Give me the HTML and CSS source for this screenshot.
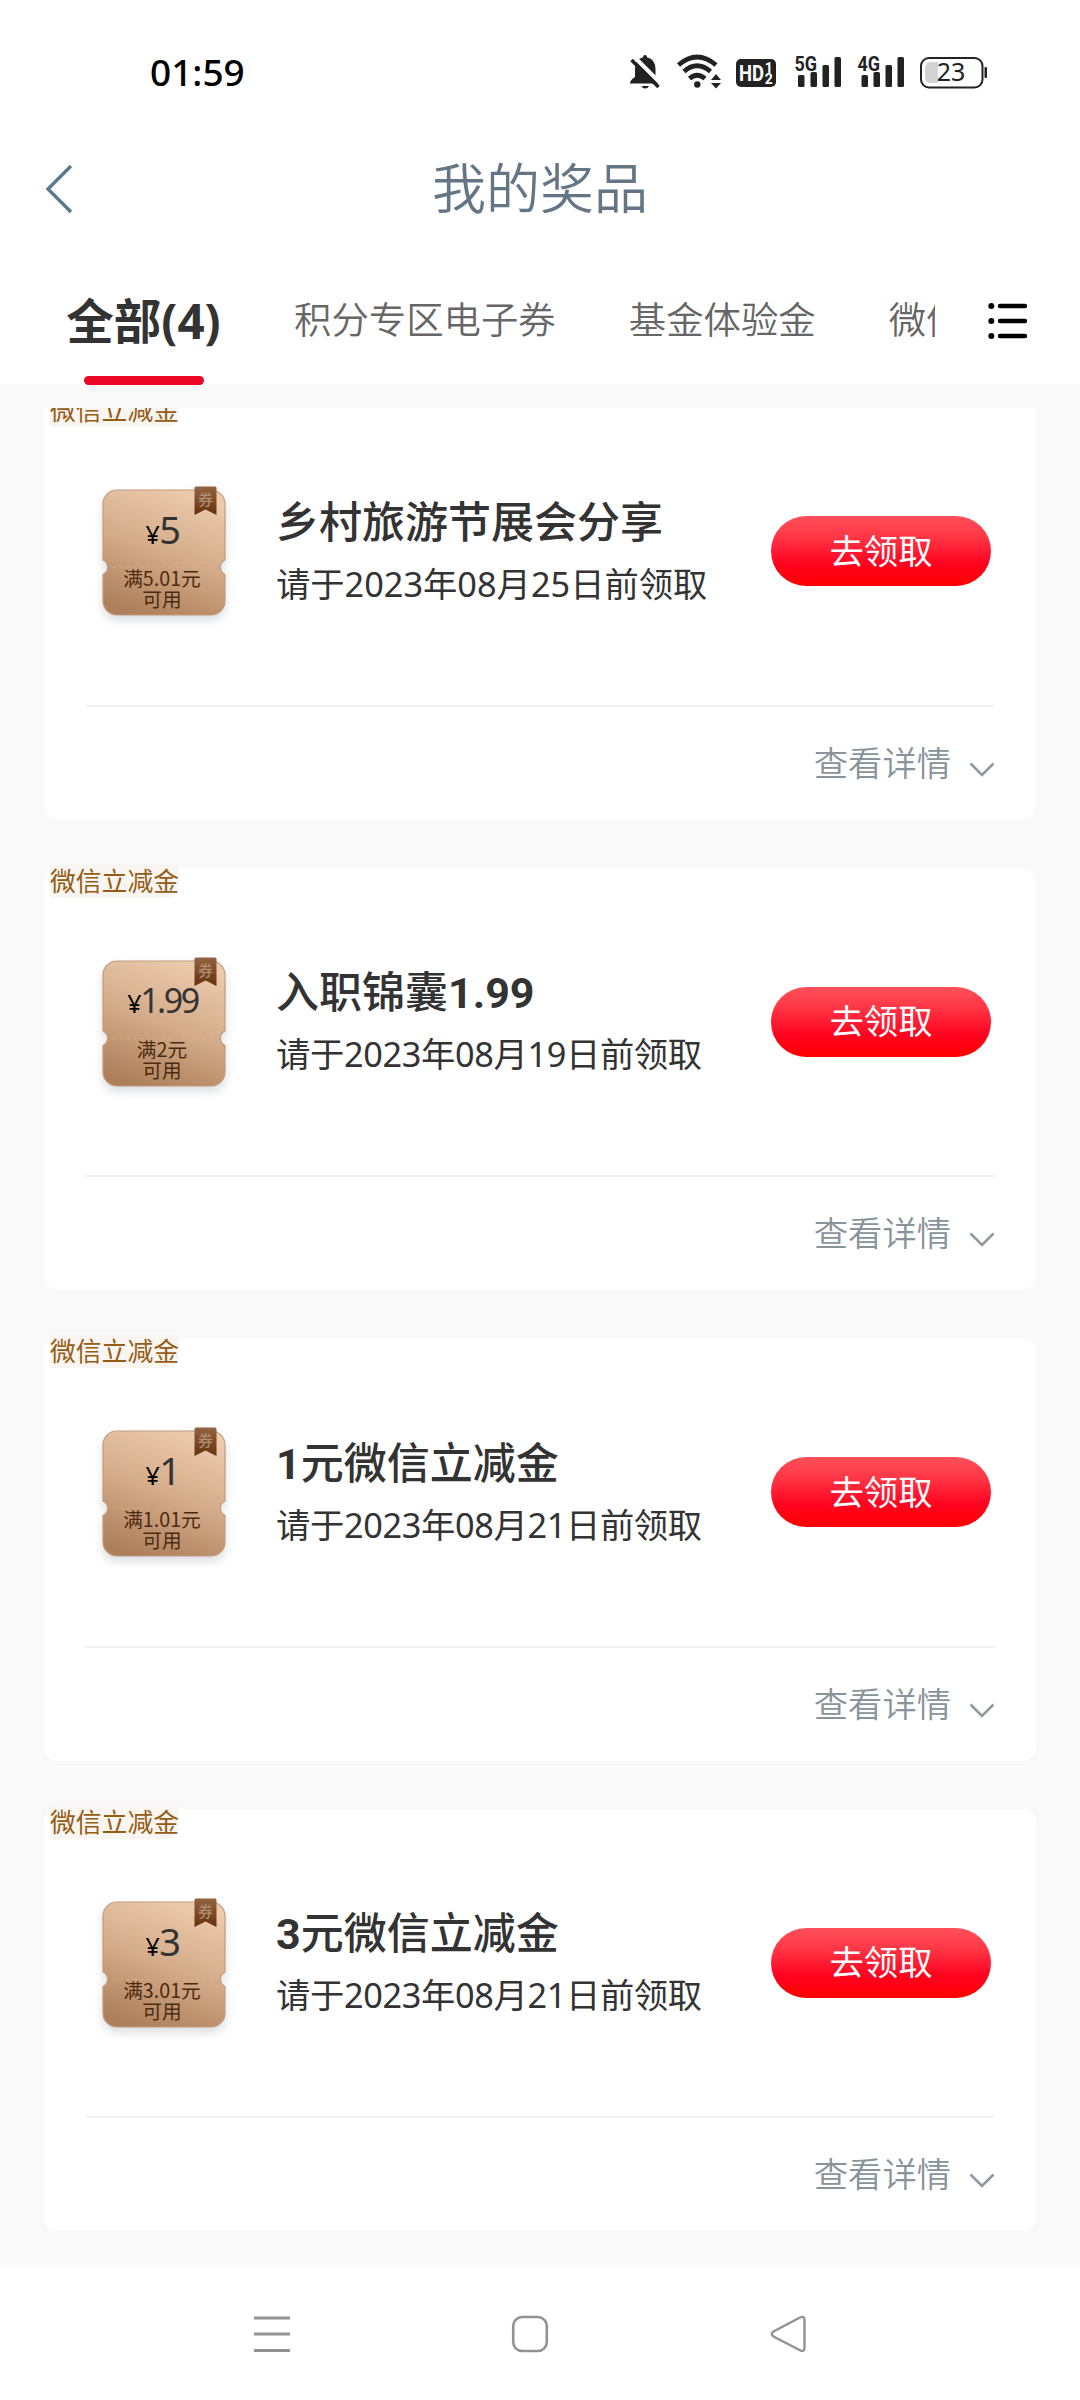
FILE: index.html
```html
<!DOCTYPE html>
<html lang="zh-CN">
<head>
<meta charset="utf-8">
<title>我的奖品</title>
<link rel="stylesheet" href="styles.css">
</head>
<body>
<svg class="defs" width="0" height="0" aria-hidden="true">
  <defs>
    <linearGradient id="gold" x1="0.65" y1="0" x2="0.3" y2="1">
      <stop offset="0" stop-color="#eccaac"/>
      <stop offset="0.5" stop-color="#d3ab89"/>
      <stop offset="1" stop-color="#ae7f5b"/>
    </linearGradient>
    <linearGradient id="ribbon" x1="0" y1="0" x2="0" y2="1">
      <stop offset="0" stop-color="#946442"/>
      <stop offset="1" stop-color="#64310c"/>
    </linearGradient>
    <symbol id="coupon" viewBox="0 0 124 130">
      <path d="M15 4H109a14 14 0 0 1 14 14V74a8 8 0 0 0 0 14.500V115a14 14 0 0 1 -14 14H15a14 14 0 0 1 -14 -14V88.500a8 8 0 0 0 0 -14.500V18a14 14 0 0 1 14 -14z" fill="url(#gold)" stroke="#c29c80" stroke-width="1.200"/>
      <path d="M10 81.500H114" stroke="#e4c6ac" stroke-width="1" stroke-dasharray="4 3" opacity="0.3"/>
      <path d="M92.500 2q0-1.500 1.500-1.500H113q1.500 0 1.500 1.500V29L103.500 23.500L92.500 29z" fill="url(#ribbon)"/>
    </symbol>
    <symbol id="down" viewBox="0 0 26 16">
      <path d="M1.500 1.500L13 13L24.500 1.500" fill="none" stroke="#8f999f" stroke-width="2.600"/>
    </symbol>
  </defs>
</svg>

<div class="status">
  <span class="clock">01:59</span>
  <svg class="status-icons" width="362" height="40" viewBox="628 52 362 40" fill="#222">
    <path d="M645 55q2 0 2 2.300q8.500 2 8.500 12v8.500q4.500 2.500 4.500 5.700H630q0-3.500 5-6.500v-7.700q0-10 8-12q0-2.300 2-2.300zM641.500 86h7.500q-1 2.500-3.750 2.500t-3.750-2.500z"/>
    <path d="M631 57.500L661 87.500" stroke="#fff" stroke-width="4" transform="translate(1.800 -2)"/>
    <path d="M631.500 60L658.500 87" stroke="#222" stroke-width="3.600"/>
    <g fill="none" stroke="#222" stroke-width="4.800">
      <path d="M678.500 65Q697 49 716 65"/>
      <path d="M684 71.500Q697 60 710.500 71.500"/>
      <path d="M689.500 78.500Q697 72 705 78.500"/>
    </g>
    <circle cx="697.300" cy="84.500" r="3.200"/>
    <path d="M711 80L716 74L721 80zM711 83L721 83L716 88.500z"/>
    <rect x="736" y="59" width="40" height="28" rx="5"/>
    <text x="739" y="81" class="hd" textLength="25" lengthAdjust="spacingAndGlyphs">HD</text>
    <text x="764.800" y="73" class="sim">1</text>
    <text x="764.800" y="84" class="sim">2</text>
    <text x="794.500" y="70.500" class="net" textLength="22.500" lengthAdjust="spacingAndGlyphs">5G</text>
    <rect x="798" y="75" width="6.500" height="12" rx="1.500"/>
    <rect x="810.500" y="72" width="6.500" height="15" rx="1.500"/>
    <rect x="822.500" y="65" width="6.500" height="22" rx="1.500"/>
    <rect x="834.500" y="57" width="6.500" height="30" rx="1.500"/>
    <text x="857.500" y="70.500" class="net" textLength="22.500" lengthAdjust="spacingAndGlyphs">4G</text>
    <rect x="861.500" y="75" width="6.500" height="12" rx="1.500"/>
    <rect x="873.500" y="72" width="6.500" height="15" rx="1.500"/>
    <rect x="885.500" y="65" width="6.500" height="22" rx="1.500"/>
    <rect x="897.500" y="57" width="6.500" height="30" rx="1.500"/>
    <path d="M931 62h7v21h-7q-6 0-6-6v-9q0-6 6-6z" fill="#d3d3d3"/>
    <rect x="921" y="58" width="61.500" height="29.500" rx="8" fill="none" stroke="#222" stroke-width="2"/>
    <rect x="984.500" y="67" width="2.500" height="11" rx="1"/>
    <text x="951" y="81" class="battery">23</text>
  </svg>
</div>

<header class="header">
  <svg class="back" width="30" height="50" viewBox="0 0 30 50"><path d="M27 2L4 25L27 48" fill="none" stroke="#5c7a8e" stroke-width="3.400"/></svg>
  <h1 class="title">我的奖品</h1>
</header>

<nav class="tabs">
  <div class="tab-strip">
    <span class="tab active">全部(4)</span>
    <span class="tab">积分专区电子券</span>
    <span class="tab">基金体验金</span>
    <span class="tab">微信立减金</span>
  </div>
  <svg class="list-icon" width="40" height="38" viewBox="0 0 40 38">
    <g stroke="#000" stroke-width="4.400" stroke-linecap="round"><path d="M12 4H37M12 19H37M12 34H37"/></g>
    <circle cx="3.300" cy="4" r="3"/><circle cx="3.300" cy="19" r="3"/><circle cx="3.300" cy="34" r="3"/>
  </svg>
</nav>

<main class="viewport">
  <div class="cards">
    <article class="card">
      <span class="tag">微信立减金</span>
      <div class="body">
        <div class="coupon"><svg class="shape"><use href="#coupon"/></svg><span class="seal">券</span>
          <div class="amount"><small>¥</small>5</div><div class="rule">满5.01元<br>可用</div></div>
        <div class="info"><h2 class="name">乡村旅游节展会分享</h2><p class="due">请于2023年08月25日前领取</p></div>
        <button class="claim">去领取</button>
      </div>
      <div class="more">查看详情<svg class="chev"><use href="#down"/></svg></div>
    </article>
    <article class="card">
      <span class="tag">微信立减金</span>
      <div class="body">
        <div class="coupon"><svg class="shape"><use href="#coupon"/></svg><span class="seal">券</span>
          <div class="amount long"><small>¥</small>1.99</div><div class="rule">满2元<br>可用</div></div>
        <div class="info"><h2 class="name">入职锦囊<b>1.99</b></h2><p class="due one">请于2023年08月19日前领取</p></div>
        <button class="claim">去领取</button>
      </div>
      <div class="more">查看详情<svg class="chev"><use href="#down"/></svg></div>
    </article>
    <article class="card">
      <span class="tag">微信立减金</span>
      <div class="body">
        <div class="coupon"><svg class="shape"><use href="#coupon"/></svg><span class="seal">券</span>
          <div class="amount"><small>¥</small>1</div><div class="rule">满1.01元<br>可用</div></div>
        <div class="info"><h2 class="name"><b>1</b>元微信立减金</h2><p class="due one">请于2023年08月21日前领取</p></div>
        <button class="claim">去领取</button>
      </div>
      <div class="more">查看详情<svg class="chev"><use href="#down"/></svg></div>
    </article>
    <article class="card">
      <span class="tag">微信立减金</span>
      <div class="body">
        <div class="coupon"><svg class="shape"><use href="#coupon"/></svg><span class="seal">券</span>
          <div class="amount"><small>¥</small>3</div><div class="rule">满3.01元<br>可用</div></div>
        <div class="info"><h2 class="name"><b>3</b>元微信立减金</h2><p class="due one">请于2023年08月21日前领取</p></div>
        <button class="claim">去领取</button>
      </div>
      <div class="more">查看详情<svg class="chev"><use href="#down"/></svg></div>
    </article>
  </div>
</main>

<footer class="sysnav">
  <svg width="38" height="40" viewBox="0 0 38 40"><path d="M1 4H37M1 20H37M1 36.500H37" stroke="#929292" stroke-width="3"/></svg>
  <svg width="38" height="40" viewBox="0 0 38 40"><rect x="2.200" y="3" width="33.600" height="34" rx="9" fill="none" stroke="#929292" stroke-width="2.600"/></svg>
  <svg width="38" height="40" viewBox="0 0 38 40"><path d="M31 3.500Q35.500 1.500 35.500 6V33.500Q35.500 38.500 31 36.200L4.500 22.500Q1 20 4.500 17.500z" fill="none" stroke="#929292" stroke-width="2.400"/></svg>
</footer>
</body>
</html>
```

FILE: styles.css
```css
* { box-sizing: border-box; }

body {
  margin: 0;
  width: 1080px;
  height: 2400px;
  overflow: hidden;
  display: flex;
  flex-direction: column;
  background: #fff;
  color: #333;
  font-family: "Noto Sans", "Noto Sans CJK SC", sans-serif;
}

svg { display: block; flex: none; }
.defs { position: absolute; }
h1, h2, p { margin: 0; font-weight: 400; }

/* status bar */
.status {
  height: 144px;
  padding: 0 90px 0 150px;
  display: flex;
  justify-content: space-between;
  align-items: center;
}
.clock { font-size: 37px; font-weight: 500; line-height: 50px; color: #000; }
.hd { font: 700 22px Roboto, sans-serif; fill: #fff; }
.sim { font: 700 14px Roboto, sans-serif; fill: #fff; }
.net { font: 700 21px Roboto, sans-serif; }
.battery { font: 400 25px "Noto Sans", sans-serif; text-anchor: middle; }

/* page header */
.header {
  height: 120px;
  margin-top: -15px;
  padding: 0 44px;
  display: flex;
  align-items: center;
}
.back { margin-right: -30px; }
.title {
  flex: 1;
  text-align: center;
  font: 350 54px/80px "Noto Sans CJK SC", sans-serif;
  color: #647585;
  padding-bottom: 6px;
}

/* tabs */
.tabs {
  height: 136px;
  padding: 0 52px 0 66px;
  display: flex;
  justify-content: space-between;
}
.tab-strip {
  width: 869px;
  display: flex;
  gap: 73px;
  overflow: hidden;
  white-space: nowrap;
}
.tab {
  flex: none;
  height: 136px;
  padding-top: 42px;
  font: 350 37.400px/54px "Noto Sans CJK SC", sans-serif;
  color: #666;
}
.tab.active {
  width: 155px;
  padding-top: 42px;
  font: 700 47.500px/60px "Noto Sans", "Noto Sans CJK SC", sans-serif;
  color: #333;
  display: flex;
  flex-direction: column;
  align-items: center;
  justify-content: space-between;
}
.tab.active::after {
  content: "";
  width: 120px;
  height: 9px;
  border-radius: 5px;
  background: #ec0928;
}
.list-icon { margin-top: 53px; }

/* prize list */
.viewport {
  height: 1882px;
  padding: 23px 0 0;
  background: #fafafa;
}
.cards {
  height: 1859px;
  overflow: hidden;
  display: flex;
  flex-direction: column;
  gap: 48px;
  padding: 0 44px;
}
.card {
  flex: none;
  height: 422.500px;
  padding: 0 42px;
  border-radius: 14px;
  background: #fff;
  box-shadow: 0 0 12px 6px #f8f8f8;
  display: flex;
  flex-direction: column;
}
.card:first-child { margin-top: -11px; }
.tag {
  align-self: flex-start;
  margin: -3px 0 0 -36px;
  height: 33px;
  border-radius: 0 0 12px 0;
  background: #f9f5f1;
  font: 400 25.800px/29px "Noto Sans CJK SC", sans-serif;
  color: #955c16;
}
.body {
  height: 279.500px;
  border-bottom: 2px solid #f1f1f1;
  padding: 59px 3px 0 16px;
  display: flex;
}
.coupon {
  position: relative;
  width: 124px;
  height: 130px;
  text-align: center;
  line-height: 1;
}
.shape {
  position: absolute;
  inset: 0;
  width: 124px;
  height: 130px;
  filter: drop-shadow(0 5px 5px rgba(60, 70, 90, .18));
}
.seal {
  position: absolute;
  left: 96px;
  top: 4px;
  font: 500 15px/18px "Noto Sans CJK SC", sans-serif;
  color: #b18c6e;
}
.amount {
  position: relative;
  padding-top: 18px;
  margin-left: -3px;
  height: 81px;
  font-size: 38px;
  font-weight: 370;
  line-height: 50px;
  letter-spacing: -1.500px;
}
.amount.long { font-size: 34px; letter-spacing: -2.500px; }
.amount small { font-size: 25px; font-weight: 400; color: #000; margin-right: 1px; }
.rule {
  position: relative;
  margin-left: -4px;
  font: 400 19.700px/21px "Noto Sans CJK SC", sans-serif;
  color: #4b2b10;
}
.info { margin-left: 50px; flex: 1; white-space: nowrap; }
.name {
  height: 60px;
  margin-top: 2.500px;
  font: 500 43px/60px "Noto Sans CJK SC", sans-serif;
}
.name b { font-family: Roboto, sans-serif; font-weight: 700; line-height: 1; }
.due { font-size: 34.300px; font-weight: 380; line-height: 50px; margin-top: 10px; }
.due.one { letter-spacing: -0.350px; }
.claim {
  flex: none;
  width: 220px;
  height: 70px;
  margin-top: 30px;
  padding: 0 0 5px;
  border: 0;
  border-radius: 35px;
  background: linear-gradient(#ff505a, #ff3645 30%, #ff0320 68%, #f00);
  font: 400 34.300px/64px "Noto Sans CJK SC", sans-serif;
  color: #fff;
}
.more {
  display: flex;
  justify-content: flex-end;
  font: 350 34.300px/50px "Noto Sans CJK SC", sans-serif;
  color: #88939a;
  padding-top: 29px;
}
.chev { width: 26px; height: 16px; margin: 26px -1px 0 18px; }

/* system navigation */
.sysnav {
  height: 133px;
  padding: 47px 273px 0 253px;
  display: flex;
  justify-content: space-between;
}
```
